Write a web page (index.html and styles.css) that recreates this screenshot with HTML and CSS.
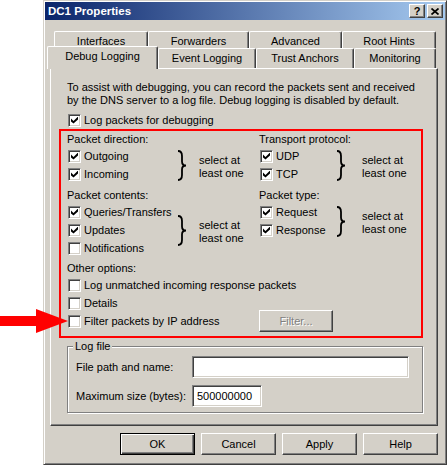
FILE: index.html
```html
<!DOCTYPE html>
<html>
<head>
<meta charset="utf-8">
<title>DC1 Properties</title>
<link rel="stylesheet" href="styles.css">
</head>
<body>
<svg class="arrow" width="68" height="24" viewBox="0 0 68 24"><polygon points="0,7 36,7 36,0 68,12 36,24 36,17 0,17" fill="#ff0000"/></svg>
<div class="window">
  <div class="titlebar">
    <span class="title">DC1 Properties</span>
    <span class="tbtns">
      <span class="tbtn q">?</span>
      <span class="tbtn"><svg width="8" height="7" viewBox="0 0 8 7"><path d="M0.5 0.5 L7.5 6.5 M7.5 0.5 L0.5 6.5" stroke="#000" stroke-width="1.7" fill="none"/></svg></span>
    </span>
  </div>
  <div class="tabs">
    <div class="tabrow back">
      <div class="tab t-if">Interfaces</div>
      <div class="tab t-fw">Forwarders</div>
      <div class="tab t-adv">Advanced</div>
      <div class="tab t-rh">Root Hints</div>
    </div>
    <div class="tabrow front">
      <div class="tab sel t-dbg">Debug Logging</div>
      <div class="tab t-ev">Event Logging</div>
      <div class="tab t-ta">Trust Anchors</div>
      <div class="tab t-mon">Monitoring</div>
    </div>
  </div>
  <div class="panel">
    <p class="intro">To assist with debugging, you can record the packets sent and received<br>by the DNS server to a log file. Debug logging is disabled by default.</p>
    <div class="chk toprow"><span class="cb on"></span>Log packets for debugging</div>
    <div class="redbox">
      <div class="pair">
        <div class="group gl">
          <div class="head">Packet direction:</div>
          <div class="sect">
            <div class="checks">
              <div class="chk"><span class="cb on"></span>Outgoing</div>
              <div class="chk"><span class="cb on"></span>Incoming</div>
            </div>
            <svg class="brace" viewBox="0 0 10 31"><path d="M1 1 Q5 1 5 6 L5 11.5 Q5 15.5 9 15.5 Q5 15.5 5 19.5 L5 25 Q5 30 1 30" stroke="#000" stroke-width="1.8" fill="none"/></svg>
            <div class="note">select at<br>least one</div>
          </div>
        </div>
        <div class="group gr">
          <div class="head">Transport protocol:</div>
          <div class="sect">
            <div class="checks">
              <div class="chk"><span class="cb on"></span>UDP</div>
              <div class="chk"><span class="cb on"></span>TCP</div>
            </div>
            <svg class="brace" viewBox="0 0 10 31"><path d="M1 1 Q5 1 5 6 L5 11.5 Q5 15.5 9 15.5 Q5 15.5 5 19.5 L5 25 Q5 30 1 30" stroke="#000" stroke-width="1.8" fill="none"/></svg>
            <div class="note">select at<br>least one</div>
          </div>
        </div>
      </div>
      <div class="pair second">
        <div class="group gl">
          <div class="head">Packet contents:</div>
          <div class="sect">
            <div class="checks">
              <div class="chk"><span class="cb on"></span>Queries/Transfers</div>
              <div class="chk"><span class="cb on"></span>Updates</div>
              <div class="chk"><span class="cb"></span>Notifications</div>
            </div>
            <svg class="brace" viewBox="0 0 10 31"><path d="M1 1 Q5 1 5 6 L5 11.5 Q5 15.5 9 15.5 Q5 15.5 5 19.5 L5 25 Q5 30 1 30" stroke="#000" stroke-width="1.8" fill="none"/></svg>
            <div class="note">select at<br>least one</div>
          </div>
        </div>
        <div class="group gr">
          <div class="head">Packet type:</div>
          <div class="sect">
            <div class="checks">
              <div class="chk"><span class="cb on"></span>Request</div>
              <div class="chk"><span class="cb on"></span>Response</div>
            </div>
            <svg class="brace" viewBox="0 0 10 31"><path d="M1 1 Q5 1 5 6 L5 11.5 Q5 15.5 9 15.5 Q5 15.5 5 19.5 L5 25 Q5 30 1 30" stroke="#000" stroke-width="1.8" fill="none"/></svg>
            <div class="note">select at<br>least one</div>
          </div>
        </div>
      </div>
      <div class="head other">Other options:</div>
      <div class="chk"><span class="cb"></span>Log unmatched incoming response packets</div>
      <div class="chk"><span class="cb"></span>Details</div>
      <div class="frow">
        <div class="chk fchk"><span class="cb"></span>Filter packets by IP address</div>
        <div class="btn filter">Filter...</div>
      </div>
    </div>
    <fieldset class="logfile">
      <legend>Log file</legend>
      <div class="field"><span class="lbl">File path and name:</span><div class="input wide"></div></div>
      <div class="field f2"><span class="lbl">Maximum size (bytes):</span><div class="input narrow">500000000</div></div>
    </fieldset>
  </div>
  <div class="buttons">
    <div class="btn dflt">OK</div>
    <div class="btn">Cancel</div>
    <div class="btn">Apply</div>
    <div class="btn">Help</div>
  </div>
</div>
</body>
</html>
```
FILE: styles.css
```css
* { box-sizing: border-box; }
html, body { margin: 0; padding: 0; background: #fff; }
body {
  font-family: "Liberation Sans", Arial, sans-serif;
  font-size: 11px;
  color: #000;
  position: relative;
  width: 447px;
  height: 466px;
  overflow: hidden;
}
.arrow { position: absolute; left: 0; top: 309px; z-index: 5; }

.window {
  margin-left: 43px;
  width: 404px;
  height: 465px;
  background: #d4d0c8;
  border: 1px solid;
  border-color: #d4d0c8 #404040 #404040 #d4d0c8;
  box-shadow: inset 1px 1px #fff, inset -1px -1px #808080;
  padding: 1px;
}

.titlebar {
  height: 18px;
  display: flex;
  align-items: center;
  justify-content: space-between;
  background: linear-gradient(to right, #0a246a, #a6caf0);
  color: #fff;
  font-weight: bold;
  font-size: 11.5px;
  padding: 0 2px 0 3px;
}
.tbtns { display: flex; gap: 2px; }
.tbtn {
  width: 16px;
  height: 14px;
  background: #d4d0c8;
  border: 1px solid;
  border-color: #fff #404040 #404040 #fff;
  box-shadow: inset -1px -1px #808080;
  display: flex;
  align-items: center;
  justify-content: center;
  color: #000;
  font-size: 11px;
  font-weight: bold;
  line-height: 1;
}

.tabs { margin-top: 11px; }
.tabrow { display: flex; }
.back { margin-left: 9px; height: 17px; }
.front { margin-left: 2px; height: 20px; }
.tab {
  flex: none;
  text-align: center;
  border-top: 1px solid #fff;
  border-left: 1px solid #fff;
  border-right: 1px solid #404040;
  box-shadow: inset -1px 0 #808080;
  border-radius: 2px 2px 0 0;
  background: #d4d0c8;
}
.back .tab { height: 17px; padding-top: 2px; line-height: 15px; }
.front .tab { height: 20px; line-height: 19px; }
.t-if { width: 94px; }
.t-fw { width: 101px; }
.t-adv { width: 93px; }
.t-rh { width: 94px; }
.t-dbg { width: 111px; }
.t-ev { width: 98px; }
.t-ta { width: 98px; }
.t-mon { width: 82px; }
.front .tab.sel {
  position: relative;
  z-index: 2;
  height: 23px;
  margin-top: -2px;
  line-height: 19px;
}

.panel {
  margin-left: 5px;
  width: 388px;
  height: 358px;
  border: 1px solid;
  border-color: #fff #404040 #404040 #fff;
  box-shadow: inset -1px -1px #808080;
}
.intro { margin: 12px 0 0 16px; line-height: 13px; }

.chk { display: flex; align-items: center; height: 18px; white-space: nowrap; }
.cb {
  flex: none;
  width: 13px;
  height: 13px;
  margin: 0 3px 0 1px;
  background: #fff;
  border: 1px solid;
  border-color: #808080 #fff #fff #808080;
  box-shadow: inset 1px 1px #404040, inset -1px -1px #d4d0c8;
  display: flex;
  align-items: center;
  justify-content: center;
}
.cb.on::before {
  content: "";
  width: 7px;
  height: 7px;
  background: #000;
  clip-path: polygon(0 2px, 2.5px 4.5px, 7px 0, 7px 3px, 2.5px 7px, 0 5px);
}
.toprow { margin: 4px 0 0 16px; }

.redbox {
  margin-left: 8px;
  width: 364px;
  border: 2px solid #ff0000;
  padding: 0 0 6px 6px;
}
.head { height: 16px; line-height: 16px; }
.pair { display: flex; }
.pair.second { margin-top: 4px; }
.gl { width: 192px; }
.gr { width: 160px; }
.sect { display: flex; align-items: center; }
.gl .checks { width: 110px; }
.gr .checks { width: 77px; }
.brace { flex: none; width: 10px; height: 31px; }
.note { line-height: 13px; margin-top: 3px; }
.gl .note { margin-left: 12px; }
.gr .note { margin-left: 16px; }
.head.other { margin-top: 3px; }

.frow { display: flex; align-items: center; height: 18px; }
.fchk { width: 192px; }

.btn {
  flex: none;
  width: 75px;
  height: 22px;
  display: flex;
  align-items: center;
  justify-content: center;
  background: #d4d0c8;
  border: 1px solid;
  border-color: #fff #404040 #404040 #fff;
  box-shadow: inset -1px -1px #808080;
}
.btn.filter {
  width: 74px;
  color: #808080;
  text-shadow: 1px 1px #fff;
}
.btn.dflt {
  border: 1px solid #000;
  box-shadow: inset 1px 1px #fff, inset -1px -1px #404040, inset -2px -2px #808080;
}

.logfile {
  margin: 2px 0 0 16px;
  width: 356px;
  min-width: 0;
  padding: 3px 0 5px 8px;
  border: 1px solid #808080;
  box-shadow: inset 1px 1px #fff, 1px 1px #fff;
}
.logfile legend {
  margin-left: -3px;
  padding: 0 2px;
  line-height: 13px;
  background: #d4d0c8;
}
.field { display: flex; align-items: center; height: 22px; }
.field.f2 { margin-top: 7px; }
.lbl { width: 116px; flex: none; }
.input {
  height: 22px;
  background: #fff;
  border: 1px solid;
  border-color: #808080 #fff #fff #808080;
  box-shadow: inset 1px 1px #404040, inset -1px -1px #d4d0c8;
  padding-left: 4px;
  display: flex;
  align-items: center;
}
.input.wide { width: 217px; }
.input.narrow { width: 70px; }

.buttons {
  display: flex;
  justify-content: flex-end;
  gap: 6px;
  margin: 7px 7px 0 0;
}
```
